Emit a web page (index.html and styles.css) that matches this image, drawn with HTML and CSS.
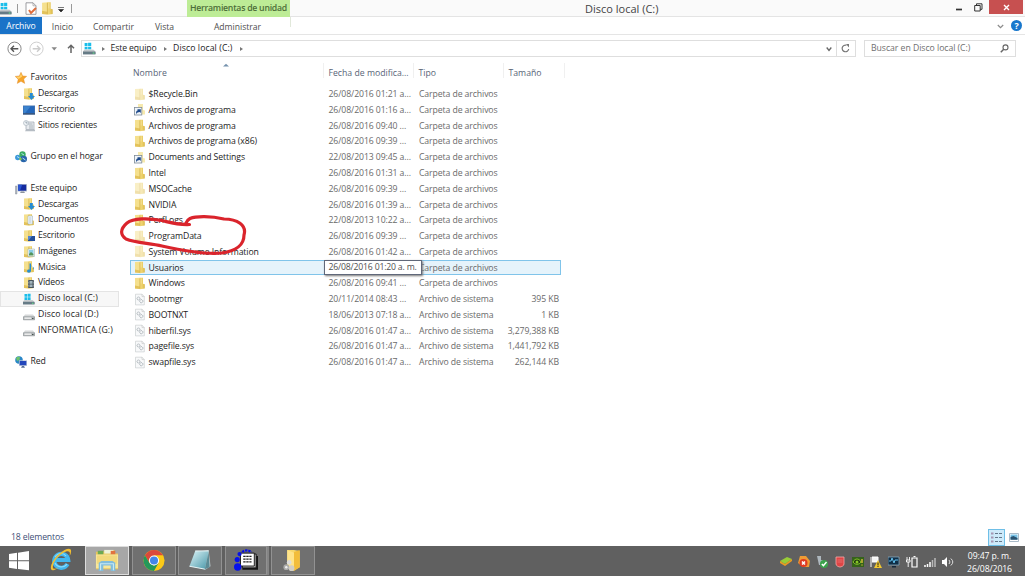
FILE: index.html
```html
<!DOCTYPE html>
<html lang="es">
<head>
<meta charset="utf-8">
<title>Disco local (C:)</title>
<link rel="stylesheet" href="styles.css">
</head>
<body>
<svg class="defs" width="0" height="0" aria-hidden="true">
  <defs>
    <linearGradient id="gold" x1="0" x2="1"><stop offset="0" stop-color="#f3da7c"/><stop offset=".5" stop-color="#ecd06a"/><stop offset="1" stop-color="#d9b748"/></linearGradient>
    <linearGradient id="metal" x1="0" x2="0" y1="0" y2="1"><stop offset="0" stop-color="#d4d8da"/><stop offset="1" stop-color="#6f7f88"/></linearGradient>
    <linearGradient id="glass" x1="0" y1="0" x2="1" y2="1"><stop offset="0" stop-color="#def5f8"/><stop offset="1" stop-color="#4796a8"/></linearGradient>
    <linearGradient id="bar" x1="0" x2="1"><stop offset="0" stop-color="#c3c3c3"/><stop offset=".5" stop-color="#a2a2a2"/><stop offset="1" stop-color="#bcbcbc"/></linearGradient>
  </defs>
  <symbol id="folder" viewBox="0 0 12 12"><path d="M1 .6l5.500-.3v11L1 11z" fill="#f5e08e"/><path d="M5.800.3H9v5.900l1.800.6v4.300l-5 .6z" fill="url(#gold)"/><path d="M1 8l4.800 1v2.600L1 11z" fill="#e3c25b"/><path d="M5.900.8v10.400" stroke="#cda93c" stroke-width=".6"/><path d="M7.200 1v5" stroke="#f9eab0" stroke-width=".6"/></symbol>
  <symbol id="file" viewBox="0 0 12 12"><path d="M1.500.7h6.500l2.300 2.300v8.400H1.500z" fill="#f8f9fa" stroke="#c3c7ca" stroke-width=".6"/><path d="M8 .7v2.400h2.300" fill="none" stroke="#bbb" stroke-width=".5"/><circle cx="4.500" cy="5" r="1.500" fill="none" stroke="#9ca5ab" stroke-width=".9" stroke-dasharray="1 .3"/><circle cx="7.300" cy="7.700" r="1.600" fill="none" stroke="#9ca5ab" stroke-width=".9" stroke-dasharray="1 .3"/></symbol>
  <symbol id="link" viewBox="0 0 12 12"><path d="M4 .5h5v6l2 .5V11H4z" fill="#f6e9ae"/><rect x=".4" y="4" width="7.400" height="7.500" fill="#f1f5f9" stroke="#7f8c99" stroke-width=".8"/><path d="M2 10.500c0-2.300.5-3.500 2-3.700L3.200 5.700h3.600v3.800L5.700 8.600C4 8.800 3 9.300 2 10.500z" fill="#1d498a"/></symbol>
  <symbol id="drivewin" viewBox="0 0 12 12"><path d="M1.500 1h2.700v2.800H1.500zM4.700.8h2.900v3H4.700zM1.500 4.300h2.700V7H1.500zM4.700 4.300h2.900V7H4.700z" fill="#19bdea"/><path d="M1.500 7h8l2 1.700v2.600H0V8.500z" fill="url(#metal)"/><path d="M0 9h11.500v2.300H0z" fill="#667b86"/><path d="M9 9.700h1.500v1H9z" fill="#62e487"/></symbol>
  <symbol id="drive" viewBox="0 0 12 12"><path d="M2 5.500h8l1.700 2.300v3H.3v-3z" fill="#d6d8d9"/><path d="M.4 7.800h11.200v3H.4z" fill="#b9bdbf" stroke="#858b8e" stroke-width=".6" rx="1"/><path d="M1.500 8.500h6.700v1.300H1.500z" fill="#f5f5f5"/><path d="M9 9h1.500v1H9z" fill="#45524d"/></symbol>
  <symbol id="screen" viewBox="0 0 12 12"><path d="M0 1.500h12v9H0z" fill="#4b77ae"/><path d="M.7 2.200h10.600v7H.7z" fill="#2467bb"/><path d="M.7 2.200h7L2 9.200H.7z" fill="#3c83ce"/><path d="M0 9.300h12v1.200H0z" fill="#344c70"/></symbol>
  <symbol id="star" viewBox="0 0 12 12"><path d="M6 .3l1.700 3.600 4 .4-3 2.800 1 4.300L6 9.300l-3.700 2.100.9-4.200-3-2.800 4.100-.5z" fill="#f6a52b" stroke="#df8322" stroke-width=".4"/><path d="M6 1.500l1.200 3L3.500 7 1.300 4.900l3.400-.5z" fill="#ffd36b"/></symbol>
  <symbol id="recent" viewBox="0 0 12 12"><path d="M3 2h8v7.500H3z" fill="#e8ebef" stroke="#9ba5af" stroke-width=".7"/><path d="M4.500 4h5M6 6h4M6 8h4" stroke="#9ba5af" stroke-width=".8"/><circle cx="3" cy="3" r="2.500" fill="#eef2f5" stroke="#a3afb9" stroke-width=".6"/><path d="M3 1.500V3h1.500" fill="none" stroke="#68798b" stroke-width=".6"/><path d="M3 9.500h9v1.800H2z" fill="#b5bcc3"/></symbol>
  <symbol id="group" viewBox="0 0 12 12"><circle cx="2.800" cy="6.500" r="2.700" fill="#3d98da"/><circle cx="7.500" cy="3.500" r="3.200" fill="#3bad63"/><circle cx="8.700" cy="8" r="3.300" fill="#2865ab"/><path d="M2 5.500l2.500 1.500M6.500 2.500L9 4M7.500 7l3 2" stroke="#b3e8ef" stroke-width="1"/><circle cx="5.500" cy="8" r="1.300" fill="#89c947"/></symbol>
  <symbol id="pc" viewBox="0 0 12 12"><path d="M.3 3H2v8H.3z" fill="#b4bac4" stroke="#7c8490" stroke-width=".4"/><path d="M2.500 1H12v7.500H2.500z" fill="#b8c3d2"/><path d="M3.200 1.700h8v6h-8z" fill="#152b9f"/><path d="M3.200 1.700h4L5 7.700H3.200z" fill="#2955d2"/><path d="M6 8.500h3l1 1.500H5z" fill="#8c949f"/></symbol>
  <symbol id="net" viewBox="0 0 12 12"><circle cx="4" cy="4" r="3.800" fill="#2b87c8"/><path d="M1 2c1-1.500 3-1.500 4-1L4.500 4 2 5zM3 6l3-1v2z" fill="#6fc36b"/><path d="M4 4.300h8V10H4z" fill="#bac5da"/><path d="M4.700 5h6.600v4.200H4.700z" fill="#2346bb"/><path d="M7 10h2l1 1.700H6z" fill="#596f94"/></symbol>
  <symbol id="down" viewBox="0 0 12 12"><use href="#folder"/><path d="M6.800 5h3v3H12l-3.600 4L5 8h1.800z" fill="#268bd1"/></symbol>
  <symbol id="docs" viewBox="0 0 12 12"><use href="#folder"/><path d="M5 2h4.500v8H5z" fill="#f8fbfe" stroke="#91a9bb" stroke-width=".5"/><path d="M6 4h2.500M6 6h2.500M6 8h2.500" stroke="#769bb9" stroke-width=".6"/></symbol>
  <symbol id="desk" viewBox="0 0 12 12"><use href="#folder"/><path d="M5 6h7v5H5z" fill="#234e9a"/><path d="M5 6h4l-3 4H5z" fill="#5687ce"/></symbol>
  <symbol id="pics" viewBox="0 0 12 12"><use href="#folder"/><path d="M5 3h6.500v7.500H5z" fill="#f6f8f8" stroke="#8daaa9" stroke-width=".5"/><path d="M6 4h4.500v4H6z" fill="#8acce5"/><path d="M6 8l2-2 2.500 2v1.500H6z" fill="#53945b"/></symbol>
  <symbol id="music" viewBox="0 0 12 12"><use href="#folder"/><path d="M6.500 2.500v6a2 1.600 0 1 0 1.500 1.300V5l2 .7v3c2-2-.2-3.200-2-4.200v-2z" fill="#288ed0"/></symbol>
  <symbol id="video" viewBox="0 0 12 12"><use href="#folder"/><path d="M5 3h6v8H5z" fill="#4a555c"/><path d="M6.500 4h3v2.700h-3zM6.500 7.500h3V10h-3z" fill="#a3b5bc"/><path d="M5.500 3.500v7M10.500 3.500v7" stroke="#dce3e5" stroke-width=".5" stroke-dasharray=".8 .7"/></symbol>
</svg>

<div class="window">
  <header class="titlebar">
    <div class="quick">
      <svg class="q-drive"><use href="#drivewin"/></svg><i class="bar b1"></i>
      <svg class="q-prop" viewBox="0 0 12 13"><path d="M1 .8h7l3 3v8.500H1z" fill="#fff" stroke="#85858c" stroke-width=".8"/><path d="M8 .8v3h3" fill="none" stroke="#999" stroke-width=".7"/><path d="M4 8l2 3 5-5" fill="none" stroke="#df6c3a" stroke-width="2"/></svg>
      <svg class="q-folder"><use href="#folder"/></svg>
      <svg class="q-menu" viewBox="0 0 6 6"><path d="M0 .5h6M.5 2.500h5L3 5z" fill="#222" stroke="#222" stroke-width=".6"/></svg><i class="bar b2"></i>
    </div>
    <div class="tooltab"><span class="t">Herramientas de unidad</span></div>
    <div class="caption"><span class="t">Disco local (C:)</span></div>
    <div class="controls">
      <svg class="min" viewBox="0 0 6 9"><path d="M0 7.500h6" stroke="#333" stroke-width="1.700"/></svg>
      <svg class="max" viewBox="0 0 9 9"><path d="M.7 2.500h5.500v5.500H.7zM2.500 2.500v-1.700h5.500v5.500H6.200" fill="none" stroke="#333" stroke-width="1"/></svg>
      <div class="close"><svg viewBox="0 0 7 7"><path d="M1 1l5 5M6 1L1 6" stroke="#fff" stroke-width="1.400"/></svg></div>
    </div>
  </header>
  <nav class="ribbon">
    <div class="tab file"><span class="t">Archivo</span></div>
    <div class="tab inicio"><span class="t">Inicio</span></div>
    <div class="tab compartir"><span class="t">Compartir</span></div>
    <div class="tab vista"><span class="t">Vista</span></div>
    <div class="tab admin"><span class="t">Administrar</span></div>
    <svg class="r-chev" viewBox="0 0 7 5"><path d="M.8 1l2.700 2.700L6.200 1" fill="none" stroke="#8a8a8a" stroke-width="1.200"/></svg>
    <div class="help">?</div>
  </nav>
  <div class="address">
    <svg class="nav-icons" viewBox="0 0 80 18"><circle cx="14.500" cy="8.700" r="6.600" fill="none" stroke="#888" stroke-width="1"/><path d="M18.300 8.700h-7M14 5.700l-3 3 3 3" fill="none" stroke="#555" stroke-width="1.400"/><circle cx="36.500" cy="8.700" r="6.600" fill="none" stroke="#d0d0d0"/><path d="M32.700 8.700h7M37 5.700l3 3-3 3" fill="none" stroke="#ccc" stroke-width="1.400"/><path d="M51.500 7.200h5.500L54.250 10.500z" fill="#888"/><path d="M71 13V5.500M68 8.300l3-3 3 3" fill="none" stroke="#666" stroke-width="1.500"/></svg>
    <div class="crumbs">
      <svg class="c-drive"><use href="#drivewin"/></svg><i class="arrow a1"></i><span class="t c1">Este equipo</span><i class="arrow"></i><span class="t c2">Disco local (C:)</span><i class="arrow"></i>
      <svg class="drop" viewBox="0 0 6 6"><path d="M.7 1.500L3 4.500l2.300-3" fill="none" stroke="#666" stroke-width="1.300"/></svg>
      <div class="refresh"><svg viewBox="0 0 9 9"><path d="M5.500 1.300A3.300 3.300 0 1 0 7.700 5" fill="none" stroke="#777" stroke-width="1.200"/><path d="M5 0h3v3.500z" fill="#777"/></svg></div>
    </div>
    <div class="search"><span class="t">Buscar en Disco local (C:)</span><svg viewBox="0 0 9 9"><circle cx="5.500" cy="3.400" r="2.500" fill="none" stroke="#666" stroke-width="1.100"/><path d="M3.700 5.200L.8 8.200" stroke="#666" stroke-width="1.500"/></svg></div>
  </div>
  <main class="content">
    <aside class="side">
      <div class="node root"><svg><use href="#star"/></svg><span class="t">Favoritos</span></div>
      <div class="node"><svg><use href="#down"/></svg><span class="t">Descargas</span></div>
      <div class="node"><svg><use href="#screen"/></svg><span class="t">Escritorio</span></div>
      <div class="node"><svg><use href="#recent"/></svg><span class="t">Sitios recientes</span></div>
      <div class="node"></div>
      <div class="node root"><svg><use href="#group"/></svg><span class="t">Grupo en el hogar</span></div>
      <div class="node"></div>
      <div class="node root"><svg><use href="#pc"/></svg><span class="t">Este equipo</span></div>
      <div class="node"><svg><use href="#down"/></svg><span class="t">Descargas</span></div>
      <div class="node"><svg><use href="#docs"/></svg><span class="t">Documentos</span></div>
      <div class="node"><svg><use href="#desk"/></svg><span class="t">Escritorio</span></div>
      <div class="node"><svg><use href="#pics"/></svg><span class="t">Imágenes</span></div>
      <div class="node"><svg><use href="#music"/></svg><span class="t">Música</span></div>
      <div class="node"><svg><use href="#video"/></svg><span class="t">Vídeos</span></div>
      <div class="node disk current"><svg><use href="#drivewin"/></svg><span class="t">Disco local (C:)</span></div>
      <div class="node disk"><svg><use href="#drive"/></svg><span class="t">Disco local (D:)</span></div>
      <div class="node disk"><svg><use href="#drive"/></svg><span class="t">INFORMATICA (G:)</span></div>
      <div class="node"></div>
      <div class="node root"><svg><use href="#net"/></svg><span class="t">Red</span></div>
    </aside>
    <section class="list">
      <div class="head"><span class="h-name">Nombre<svg class="sort" viewBox="0 0 6 4"><path d="M0 3.500L3 .7l3 2.800z" fill="#7592ad"/></svg></span><span>Fecha de modifica...</span><span>Tipo</span><span>Tamaño</span></div>
      <div class="row pale"><svg><use href="#folder"/></svg><b>$Recycle.Bin</b><span>26/08/2016 01:21 a...</span><span>Carpeta de archivos</span><em></em></div>
      <div class="row"><svg><use href="#link"/></svg><b>Archivos de programa</b><span>26/08/2016 01:16 a...</span><span>Carpeta de archivos</span><em></em></div>
      <div class="row"><svg><use href="#folder"/></svg><b>Archivos de programa</b><span>26/08/2016 09:40 ...</span><span>Carpeta de archivos</span><em></em></div>
      <div class="row"><svg><use href="#folder"/></svg><b>Archivos de programa (x86)</b><span>26/08/2016 09:39 ...</span><span>Carpeta de archivos</span><em></em></div>
      <div class="row"><svg><use href="#link"/></svg><b>Documents and Settings</b><span>22/08/2013 09:45 a...</span><span>Carpeta de archivos</span><em></em></div>
      <div class="row"><svg><use href="#folder"/></svg><b>Intel</b><span>26/08/2016 01:31 a...</span><span>Carpeta de archivos</span><em></em></div>
      <div class="row pale"><svg><use href="#folder"/></svg><b>MSOCache</b><span>26/08/2016 09:39 ...</span><span>Carpeta de archivos</span><em></em></div>
      <div class="row"><svg><use href="#folder"/></svg><b>NVIDIA</b><span>26/08/2016 01:39 a...</span><span>Carpeta de archivos</span><em></em></div>
      <div class="row"><svg><use href="#folder"/></svg><b>PerfLogs</b><span>22/08/2013 10:22 a...</span><span>Carpeta de archivos</span><em></em></div>
      <div class="row pale"><svg><use href="#folder"/></svg><b>ProgramData</b><span>26/08/2016 09:39 ...</span><span>Carpeta de archivos</span><em></em></div>
      <div class="row pale"><svg><use href="#folder"/></svg><b>System Volume Information</b><span>26/08/2016 01:42 a...</span><span>Carpeta de archivos</span><em></em></div>
      <div class="row hover"><svg><use href="#folder"/></svg><b>Usuarios</b><span class="tipcell"><span class="tip">26/08/2016 01:20 a. m.</span></span><span>Carpeta de archivos</span><em></em></div>
      <div class="row"><svg><use href="#folder"/></svg><b>Windows</b><span>26/08/2016 09:41 ...</span><span>Carpeta de archivos</span><em></em></div>
      <div class="row"><svg><use href="#file"/></svg><b>bootmgr</b><span>20/11/2014 08:43 ...</span><span>Archivo de sistema</span><em>395 KB</em></div>
      <div class="row"><svg><use href="#file"/></svg><b>BOOTNXT</b><span>18/06/2013 07:18 a...</span><span>Archivo de sistema</span><em>1 KB</em></div>
      <div class="row"><svg><use href="#file"/></svg><b>hiberfil.sys</b><span>26/08/2016 01:47 a...</span><span>Archivo de sistema</span><em>3,279,388 KB</em></div>
      <div class="row"><svg><use href="#file"/></svg><b>pagefile.sys</b><span>26/08/2016 01:47 a...</span><span>Archivo de sistema</span><em>1,441,792 KB</em></div>
      <div class="row"><svg><use href="#file"/></svg><b>swapfile.sys</b><span>26/08/2016 01:47 a...</span><span>Archivo de sistema</span><em>262,144 KB</em></div>
      <svg class="ink" viewBox="115 210 135 48"><path d="M189.500 224.500C177 225 172 223 162 220.500C149 218 133 218 127 223C120 229 120 235 126 239C136 243 149 243 162 246C180 250 204 255 222 253C237 251 244 244 244 235C247 225 237 219 224 219C211 216 196 216 190 218.500C187 220 186.500 222 185.500 224" fill="none" stroke="#da242c" stroke-width="3.200" stroke-linecap="round" stroke-linejoin="round"/></svg>
    </section>
  </main>
  <div class="status"><span class="t">18 elementos</span>
    <div class="views"><div class="details"><svg viewBox="0 0 13 13"><path d="M1 2.500h2.500M1 6.500h2.500M1 10.500h2.500" stroke="#a596b2" stroke-width="2"/><path d="M5 2.500h3M9 2.500h3M5 6.500h3M9 6.500h3M5 10.500h3M9 10.500h3" stroke="#65788b" stroke-width="1"/></svg></div><svg class="large" viewBox="0 0 10 9"><path d="M.5.5h9v8h-9z" fill="#fff" stroke="#a9bac8"/><path d="M1.500 1.500h7v5h-7z" fill="#76c1e6"/><path d="M1.500 4l3-1 4 2v1.800h-7z" fill="#295270"/></svg></div>
  </div>
  <footer class="taskbar">
    <div class="start"><svg viewBox="0 0 20 20"><path d="M0 3l8-1.200v7.500H0zM9 1.700L20 0v9.300H9zM0 10.300h8V18l-8-1.200zM9 10.300h11v9L9 18z" fill="#fff"/></svg></div>
    <div class="ie"><svg viewBox="0 0 24 24"><path d="M18.500 16A7 7 0 1 1 19.200 12H6" fill="none" stroke="#42b8ef" stroke-width="4.200"/><path d="M18 16A7 7 0 0 1 6 15M6 9c3-5 9-4 11-1" fill="none" stroke="#8ddcfc" stroke-width="1.200"/><path d="M3 22C0 21 3 12 10 6S23-1 22 4c0 2-1 3-1.500 4C22 3 19 2 14 5 7 9 3 17 4 20c1 2 4 0 6-1-3 2-5 4-7 3z" fill="#f3bf30"/></svg></div>
    <div class="task active"><svg viewBox="0 0 26 25"><path d="M1 3h8l2-2h10l1 4h3v17H1z" fill="#e8c65a"/><path d="M3 2h6v4H3z" fill="#6ca953"/><path d="M10 1h10v4H10z" fill="#eef3db"/><path d="M17 2h5v4h-5z" fill="#e1733e"/><path d="M1 6h24v15H1z" fill="#f8e79b"/><path d="M2 7h22v9H2z" fill="#f2d97c"/><path d="M4 24v-9l3-2h12l3 2v9h-5v-6H9v6z" fill="#81bddc"/><path d="M6 23v-7h14v7" fill="none" stroke="#c6e8f4" stroke-width="1.200"/></svg></div>
    <div class="task"><svg viewBox="0 0 24 24"><circle cx="12" cy="12" r="11" fill="#fbc917"/><path d="M2.500 6.500A11 11 0 0 1 21.500 6.500H12L7.300 14.700z" fill="#db493b"/><path d="M2.500 6.500A11 11 0 0 0 12 23l4.700-8.300L12 17.400l-4.700-2.700z" fill="#24985a"/><circle cx="12" cy="12" r="5.300" fill="#fff"/><circle cx="12" cy="12" r="4.200" fill="#4386e8"/></svg></div>
    <div class="task"><svg viewBox="0 0 24 24"><path d="M7 3l14-2 2 17-6 4z" fill="#b9c6c8"/><path d="M7 2h14l-4 19L1 18z" fill="url(#glass)"/><path d="M7 2h14M1 18l16 3" stroke="#edf8f9" stroke-width="1"/><path d="M17 21l4-18 1 16z" fill="#5b8b96"/></svg></div>
    <div class="task stack"><svg viewBox="0 0 26 24"><path d="M11 7h15v15H9z" fill="#151515"/><path d="M9 5h15v15H9z" fill="#bbb" stroke="#111"/><path d="M7 4h15v14H7z" fill="#fff" stroke="#111"/><path d="M10 7.500h9M10 10.500h9M10 13.500h9" stroke="#222" stroke-width="1.300" stroke-dasharray="2.600 .7"/><path d="M9 3c2-2.500 7-2.500 10 0" fill="none" stroke="#0710e3" stroke-width="2.500" stroke-dasharray="2.500 1"/><circle cx="6" cy="5" r="2.300" fill="#0611eb"/><circle cx="3.500" cy="11" r="2.800" fill="#0611eb"/><circle cx="4" cy="19" r="4" fill="#0611eb"/></svg></div>
    <div class="task"><svg viewBox="0 0 24 24"><path d="M6 1h7l6 1v17l-7 4-6-6z" fill="#f7d86c"/><path d="M13 3l6-2v18l-6 4z" fill="#f2bd3b"/><path d="M6 1l7 3v18l-7-6z" fill="#ffe48b"/><circle cx="8" cy="14" r="2.500" fill="#ddd"/><circle cx="5" cy="19" r="3" fill="#ababaa"/><circle cx="10.500" cy="20" r="3" fill="#d1cec7"/><circle cx="5" cy="19" r="1.300" fill="#eee"/></svg></div>
    <div class="tray">
      <svg viewBox="0 0 12 14"><path d="M0 6l7-4 5 2-7 5z" fill="#98cc37"/><path d="M0 6l5 3 7-5v2l-7 5-5-3z" fill="#eb9b22"/></svg>
      <svg viewBox="0 0 12 14"><path d="M2 1h6l4 5-1 6H5L0 8z" fill="#ef9b34"/><circle cx="5.500" cy="8" r="4" fill="#df3a22"/><path d="M4 6.500l3 3M7 6.500l-3 3" stroke="#fff" stroke-width="1.500"/></svg>
      <svg viewBox="0 0 12 14"><path d="M1 1h4v4h2v5H3z" fill="#aeb7be"/><circle cx="8" cy="9" r="4" fill="#3ba34b"/><path d="M5.800 9l1.600 1.600L10.500 7" fill="none" stroke="#fff" stroke-width="1.400"/></svg>
      <svg viewBox="0 0 12 14"><path d="M2 2h8v7c0 2-3 3-4 3s-4-1-4-3z" fill="#df4545" stroke="#f4aaaa" stroke-width=".8"/><path d="M3.500 5h5M3.500 7h5" stroke="#fff4" stroke-width=".8"/></svg>
      <svg viewBox="0 0 12 14"><path d="M0 2h12v10H0z" fill="#35621b"/><path d="M1 7c2-4 6-4 8 0-2 3-6 3-8 0z" fill="#1f3a10" stroke="#87c629" stroke-width="1"/><circle cx="5" cy="7" r="1.500" fill="#87c629"/><path d="M10 4v4M10 9.500v1" stroke="#e8c63c" stroke-width="1.300"/></svg>
      <svg viewBox="0 0 12 14"><path d="M1 2v10M2 2h6v5H2" fill="#f4f4f4" stroke="#fff" stroke-width="1"/><path d="M8 5l4 8H4z" fill="#f1c830"/><path d="M8 7.500v3M8 11v1" stroke="#28200a" stroke-width="1"/></svg>
      <svg viewBox="0 0 12 14"><path d="M0 2h11v8H0z" fill="#102e46" stroke="#8eb3ca" stroke-width=".7"/><path d="M1 6h2l1-3 2 5 1-3h3" fill="none" stroke="#62c1ee" stroke-width="1"/><path d="M4 11h4v1.500H4z" fill="#16283a"/></svg>
      <svg viewBox="0 0 12 14"><path d="M6 3h5v9H6zM7.500 1.500h2" fill="none" stroke="#fff" stroke-width="1.200"/><path d="M1 2v3M3.500 2v3M.5 5H4v2H.5zM2.200 7v5" fill="none" stroke="#fff" stroke-width=".9"/></svg>
      <svg viewBox="0 0 12 14"><path d="M1 12v-2M3.500 12V9M6 12V7" stroke="#fff" stroke-width="1.500"/><path d="M8.500 12V5M11 12V3" stroke="#b9b9b9" stroke-width="1.500"/></svg>
      <svg viewBox="0 0 12 14"><path d="M0 5h2l3-3v10L2 9H0z" fill="#fff"/><path d="M7 5q2 2 0 4M8.800 3.500q4 3.500 0 7" fill="none" stroke="#ddd" stroke-width="1"/></svg>
    </div>
    <div class="clock"><span>09:47 p. m.</span><span>26/08/2016</span></div>
  </footer>
</div>
</body>
</html>
```
FILE: styles.css
```css
* { box-sizing: border-box; }
body { margin: 0; width: 1025px; height: 576px; overflow: hidden; background: #fff; color: #1c1c1c; font: 8.7px/15.77px "Open Sans", "Noto Sans", sans-serif; letter-spacing: -0.12px; }
svg { display: block; flex: none; }
.defs { position: absolute; }
.t { white-space: nowrap; }
.window { display: flex; flex-direction: column; width: 1025px; height: 576px; }
.titlebar { display: flex; height: 17px; background: #fafafa; border-bottom: 1px solid #e4e4e4; }
.quick { display: flex; align-items: center; width: 187px; height: 17px; }
.q-drive { width: 13px; height: 13px; margin-left: -1px; }
.bar { width: 1px; height: 9px; background: #999; }
.b1 { margin-left: 5px; }
.q-prop { width: 12px; height: 13px; margin-left: 7px; }
.q-folder { width: 13px; height: 13px; margin-left: 4px; }
.q-menu { width: 6px; height: 6px; margin: 2px 0 0 4px; }
.b2 { margin-left: 7px; }
.tooltab { width: 103px; height: 17px; background: #bdec96; color: #4c6d38; text-align: center; line-height: 16px; letter-spacing: -.24px; font-weight: 600; }
.caption { width: 662px; padding-left: 295px; font-size: 11px; line-height: 17px; color: #444; letter-spacing: 0; }
.controls { display: flex; }
.min { width: 6px; height: 9px; margin: 2px 0 0 4px; }
.max { width: 9px; height: 9px; margin: 3px 0 0 12px; }
.close { display: flex; align-items: center; justify-content: center; width: 34px; height: 14px; margin-left: 6px; background: #c75050; }
.close svg { width: 7px; height: 7px; }
.ribbon { display: flex; height: 18px; border-bottom: 1px solid #e5e5e5; line-height: 20px; color: #4e4e4e; }
.tab { text-align: center; letter-spacing: 0; font-size: 8.6px; }
.file { width: 42px; height: 17px; line-height: 18px; background: #1a73c8; color: #fff; letter-spacing: -.1px; }
.inicio { width: 41px; }
.compartir { width: 61px; }
.vista { width: 41px; }
.admin { width: 106px; height: 10px; margin-left: 0; }
.r-chev { width: 7px; height: 5px; margin: 7px 0 0 706px; }
.help { width: 11px; height: 11px; margin: 3px 0 0 7px; border-radius: 50%; background: #1877cc; color: #fff; font-weight: 700; font-size: 9px; line-height: 11px; text-align: center; }
.admin { border-right: 1px solid #e1e8da; }
.address { display: flex; height: 28px; padding-top: 5px; }
.nav-icons { width: 80px; height: 18px; }
.crumbs { display: flex; align-items: center; width: 775px; height: 17px; margin-left: 1px; border: 1px solid #dedede; letter-spacing: -.13px; }
.c-drive { width: 13px; height: 13px; margin-left: 1px; }
.c2 { letter-spacing: .09px; }
.arrow { width: 0; height: 0; margin: 0 6px 0 7.500px; border: 2.500px solid transparent; border-left: 3.500px solid #777; border-right: 0; }
.a1 { margin: 0 6px 0 5.500px; }
.drop { width: 6px; height: 6px; margin-left: auto; }
.refresh { width: 19px; height: 15px; margin-left: 4px; border-left: 1px solid #dedede; }
.refresh svg { width: 9px; height: 9px; margin: 3px 0 0 4px; }
.search { display: flex; align-items: center; justify-content: space-between; width: 152px; height: 17px; margin-left: 8px; padding: 0 6px; border: 1px solid #dedede; color: #6f6f6f; letter-spacing: -.04px; }
.search svg { width: 9px; height: 9px; }
.content { display: flex; height: 466px; }
.side { width: 130px; padding-top: 7.400px; }
.node { display: flex; align-items: center; height: 15.77px; padding-left: 22px; margin-right: 11px; white-space: nowrap; border: 1px solid transparent; letter-spacing: -.13px; }
.node svg { width: 12px; height: 12px; margin-right: 3px; }
.root { padding-left: 14px; letter-spacing: -.07px; }
.root svg { margin-right: 3.500px; }
.disk { letter-spacing: .12px; }
.current { background: #f7f7f7; border-color: #e4e4e4; }
.list { position: relative; width: 431px; }
.head { display: grid; grid-template-columns: 193.500px 90px 90px 61px; height: 23.200px; color: #586477; letter-spacing: 0; line-height: 20px; white-space: nowrap; }
.head span { height: 15px; border-right: 1px solid #f0f0f0; padding-left: 5px; }
.head .h-name { display: flex; padding-left: 3px; letter-spacing: .05px; }
.sort { width: 6px; height: 4px; margin-left: 56px; }
.row { display: grid; grid-template-columns: 16.500px 177px 90.500px 90px 53px; align-items: center; height: 15.77px; padding-left: 1px; white-space: nowrap; color: #6a6a6a; border: 1px solid transparent; line-height: 14px; letter-spacing: -.1px; }
.row svg:first-child { width: 12px; height: 13px; margin-left: 2px; }
.row b { font-weight: 400; color: #1c1c1c; }
.row > span { padding-left: 3px; }
.row em { font-style: normal; text-align: right; }
.pale > svg { opacity: .5; }
.hover { background: #e5f3fb; border-color: #80c4ea; }
.tipcell { position: relative; height: 14px; }
.tip { position: absolute; left: -2px; top: -1px; z-index: 2; width: 98px; height: 15px; padding-left: 4px; border: 1px solid #60687a; background: #fff; color: #505050; box-shadow: 1px 1px 2px #777; letter-spacing: -.2px; line-height: 13px; }
.ink { position: absolute; left: -15px; top: 147px; width: 135px; height: 48px; z-index: 3; }
.status { display: flex; justify-content: space-between; height: 17px; padding-left: 11px; color: #415077; letter-spacing: -.15px; }
.status > .t { padding-top: 1px; }
.views { display: flex; }
.details { width: 17px; height: 17px; border: 1px solid #6fbfe7; background: #cdeafa; }
.details svg { width: 13px; height: 13px; margin: 1px; }
.large { width: 10px; height: 9px; margin: 4px 6px 0 4px; }
.taskbar { display: flex; height: 30px; background: #606060; color: #fff; }
.start { width: 47px; padding: 5px 0 0 9px; }
.start svg { width: 20px; height: 20px; }
.ie { width: 38px; padding: 2px 0 0 2px; }
.ie svg { width: 24px; height: 24px; }
.task { display: flex; align-items: center; justify-content: center; width: 44px; height: 29px; margin-right: 2.500px; background: #707070; border: 1px solid #929292; }
.task svg { width: 24px; height: 23px; }
.active { background: #a7a7a7; border-color: #ddd; }
.stack { width: 42px; margin-right: 4.500px; box-shadow: 2px 0 #858585; }
.tray { display: flex; align-items: center; gap: 6px; margin: 2px 0 0 auto; }
.tray svg { width: 12px; height: 14px; }
.clock { display: flex; flex-direction: column; width: 71px; padding-top: 4px; text-align: center; line-height: 12.500px; }
```
